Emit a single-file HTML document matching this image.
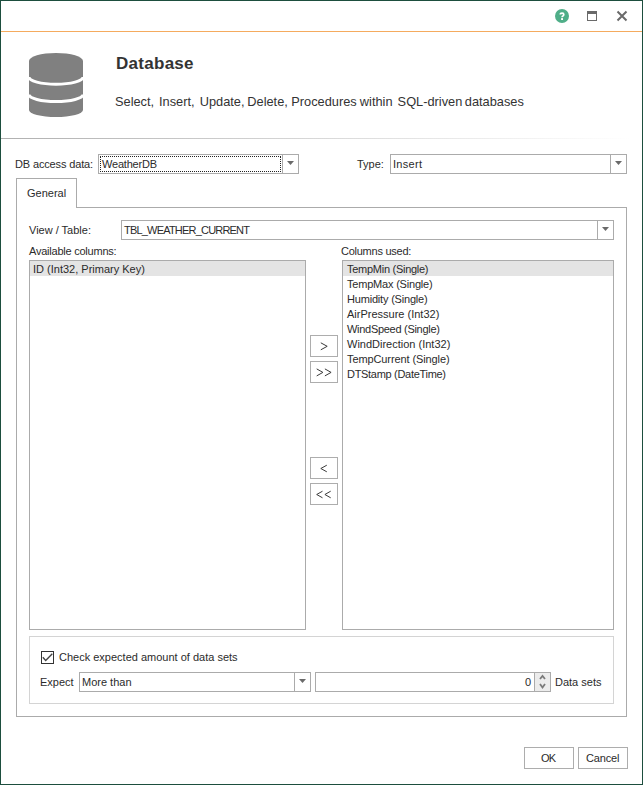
<!DOCTYPE html>
<html>
<head>
<meta charset="utf-8">
<style>
html,body{margin:0;padding:0;}
body{width:643px;height:785px;overflow:hidden;background:#fff;position:relative;font-family:"Liberation Sans",sans-serif;color:#2b2b2b;}
.a{position:absolute;}
.t{position:absolute;font-size:11px;line-height:15px;white-space:nowrap;}
.frame{left:0;top:0;width:643px;height:785px;box-sizing:border-box;border:1px solid #1d4e3e;}
.bx{position:absolute;box-sizing:border-box;border:1px solid #ababab;background:#fff;}
.dd{position:absolute;box-sizing:border-box;border-left:1px solid #ababab;top:0;bottom:0;right:0;width:16px;}
.dd:after{content:"";position:absolute;left:4px;top:6px;width:7px;height:4px;background:#6a6a6a;clip-path:polygon(0 0,100% 0,50% 100%);}
.btn{position:absolute;box-sizing:border-box;border:1px solid #adadad;background:#fff;}
</style>
</head>
<body>
<div class="a frame"></div>
<div class="a" style="left:1px;top:31px;width:641px;height:1px;background:#f5ab5e"></div>

<!-- title bar icons -->
<svg class="a" style="left:550px;top:5px" width="80" height="25" viewBox="550 5 80 25">
  <circle cx="562" cy="16" r="7" fill="#4fae88"/>
  <path d="M560.3 14.6 Q560.3 13.05 562.1 13.05 Q563.8 13.05 563.8 14.5 Q563.8 15.4 562.9 15.9 Q562.1 16.3 562.1 17.3" fill="none" stroke="#fff" stroke-width="1.7"/>
  <rect x="561.1" y="18.1" width="1.9" height="1.9" fill="#fff"/>
  <rect x="587.5" y="11.5" width="9" height="9" fill="none" stroke="#6a6a6a" stroke-width="1"/>
  <rect x="587" y="11" width="10" height="3" fill="#6a6a6a"/>
  <path d="M617.5 11.5 L626.5 20.5 M626.5 11.5 L617.5 20.5" stroke="#6a6a6a" stroke-width="2" fill="none"/>
</svg>

<!-- database icon -->
<svg class="a" style="left:20px;top:45px" width="80" height="80" viewBox="20 45 80 80">
  <path d="M29 61 A27 8 0 0 1 83 61 L83 110 A27 7 0 0 1 29 110 Z" fill="#808080"/>
  <path d="M29 77 A27 7.2 0 0 0 83 77" fill="none" stroke="#fff" stroke-width="3"/>
  <path d="M29 94.5 A27 7 0 0 0 83 94.5" fill="none" stroke="#fff" stroke-width="3"/>
</svg>

<div class="t" style="left:116px;top:54px;font-size:17px;line-height:20px;font-weight:bold;color:#333;letter-spacing:0.28px">Database</div>
<div class="t sw" style="left:115.0px;top:94px;font-size:12.8px;line-height:16px;color:#333">Select,</div><div class="t sw" style="left:159.0px;top:94px;font-size:12.8px;line-height:16px;color:#333">Insert,</div><div class="t sw" style="left:199.7px;top:94px;font-size:12.8px;line-height:16px;color:#333">Update,</div><div class="t sw" style="left:247.3px;top:94px;font-size:12.8px;line-height:16px;color:#333">Delete,</div><div class="t sw" style="left:291.3px;top:94px;font-size:12.8px;line-height:16px;color:#333">Procedures</div><div class="t sw" style="left:359.8px;top:94px;font-size:12.8px;line-height:16px;color:#333">within</div><div class="t sw" style="left:397.6px;top:94px;font-size:12.8px;line-height:16px;color:#333">SQL-driven</div><div class="t sw" style="left:464.8px;top:94px;font-size:12.8px;line-height:16px;color:#333">databases</div>

<div class="a" style="left:1px;top:138px;width:630px;height:1px;background:linear-gradient(to right,#b0b0b0,#fff)"></div>

<!-- DB access row -->
<div class="t" style="left:15px;top:157px;letter-spacing:-0.14px">DB access data:</div>
<div class="bx" style="left:98px;top:154px;width:201px;height:20px">
  <div class="a" style="left:1px;top:1px;width:181px;height:16px;box-sizing:border-box;border:1px dotted #222"></div>
  <div class="dd"></div>
</div>
<div class="t" style="left:102px;top:157px;letter-spacing:-0.2px">WeatherDB</div>

<div class="t" style="left:357px;top:157px">Type:</div>
<div class="bx" style="left:390px;top:154px;width:237px;height:20px"><div class="dd"></div></div>
<div class="t" style="left:393px;top:157px;letter-spacing:0.3px">Insert</div>

<!-- tab -->
<div class="a" style="left:16px;top:207px;width:611px;height:510px;box-sizing:border-box;border:1px solid #ababab"></div>
<div class="a" style="left:16px;top:178px;width:61px;height:30px;box-sizing:border-box;border:1px solid #ababab;border-bottom:none;background:#fff"></div>
<div class="t" style="left:27px;top:186px">General</div>

<div class="t" style="left:29px;top:223px">View / Table:</div>
<div class="bx" style="left:121px;top:220px;width:493px;height:20px"><div class="dd"></div></div>
<div class="t" style="left:124px;top:223px;letter-spacing:-0.8px">TBL_WEATHER_CURRENT</div>

<div class="t" style="left:29px;top:244px;letter-spacing:-0.23px">Available columns:</div>
<div class="bx" style="left:29px;top:260px;width:277px;height:370px">
  <div class="a" style="left:0;top:0;right:0;height:15px;background:#e4e4e4"></div>
</div>
<div class="t" style="left:33px;top:262px">ID (Int32, Primary Key)</div>

<div class="t" style="left:341px;top:244px;letter-spacing:-0.25px">Columns used:</div>
<div class="bx" style="left:342px;top:260px;width:272px;height:370px">
  <div class="a" style="left:0;top:0;right:0;height:15px;background:#e4e4e4"></div>
</div>
<div class="t" style="left:347px;top:262px;letter-spacing:-0.27px">TempMin (Single)</div>
<div class="t" style="left:347px;top:277px;letter-spacing:-0.2px">TempMax (Single)</div>
<div class="t" style="left:347px;top:292px;letter-spacing:-0.19px">Humidity (Single)</div>
<div class="t" style="left:347px;top:307px;letter-spacing:0px">AirPressure (Int32)</div>
<div class="t" style="left:347px;top:322px;letter-spacing:-0.29px">WindSpeed (Single)</div>
<div class="t" style="left:347px;top:337px;letter-spacing:0px">WindDirection (Int32)</div>
<div class="t" style="left:347px;top:352px;letter-spacing:-0.1px">TempCurrent (Single)</div>
<div class="t" style="left:347px;top:367px;letter-spacing:-0.3px">DTStamp (DateTime)</div>

<div class="btn" style="left:310px;top:335px;width:28px;height:22px"></div>
<div class="btn" style="left:310px;top:361px;width:28px;height:22px"></div>
<div class="btn" style="left:310px;top:457px;width:28px;height:22px"></div>
<div class="btn" style="left:310px;top:483px;width:28px;height:22px"></div>
<svg class="a" style="left:300px;top:330px" width="50" height="180" viewBox="300 330 50 180">
<g fill="none" stroke="#3a3a3a" stroke-width="1">
<path d="M320.8 342.8 L327.2 346.3 L320.8 349.8"/>
<path d="M316.7 368.9 L322.9 372.4 L316.7 375.9 M324.9 368.9 L331.1 372.4 L324.9 375.9"/>
<path d="M326.8 465.2 L320.8 468.5 L326.8 471.8"/>
<path d="M322.5 491.2 L316.7 494.5 L322.5 497.8 M330.7 491.2 L324.9 494.5 L330.7 497.8"/>
</g></svg>

<!-- group -->
<div class="a" style="left:29px;top:636px;width:585px;height:68px;box-sizing:border-box;border:1px solid #d4d4d4"></div>
<div class="a" style="left:41px;top:651px;width:13px;height:13px;box-sizing:border-box;border:1px solid #333"></div>
<svg class="a" style="left:41px;top:651px" width="13" height="13" viewBox="41 651 13 13"><path d="M42.8 657.3 L45.7 660.4 L52.3 653.8" fill="none" stroke="#444" stroke-width="1.4"/></svg>
<div class="t" style="left:59px;top:650px">Check expected amount of data sets</div>

<div class="t" style="left:40px;top:675px">Expect</div>
<div class="bx" style="left:79px;top:672px;width:232px;height:20px"><div class="dd"></div></div>
<div class="t" style="left:82px;top:675px">More than</div>
<div class="bx" style="left:315px;top:672px;width:236px;height:20px">
  <div class="a" style="left:218px;top:0;bottom:0;right:0;border-left:1px solid #ababab;background:#ececec"></div>
</div>
<div class="t" style="left:525px;top:675px">0</div>
<svg class="a" style="left:534px;top:672px" width="17" height="20" viewBox="534 672 17 20"><g fill="none" stroke="#7a7a7a" stroke-width="1.8"><path d="M540 679 L542.5 676 L545 679"/><path d="M540 684 L542.5 687.5 L545 684"/></g></svg>
<div class="t" style="left:555px;top:675px">Data sets</div>

<div class="btn" style="left:524px;top:747px;width:50px;height:22px"></div>
<div class="btn" style="left:578px;top:747px;width:50px;height:22px"></div>
<div class="t" style="left:541px;top:751px;letter-spacing:-0.8px">OK</div>
<div class="t" style="left:586px;top:751px;letter-spacing:-0.15px">Cancel</div>
</body>
</html>
